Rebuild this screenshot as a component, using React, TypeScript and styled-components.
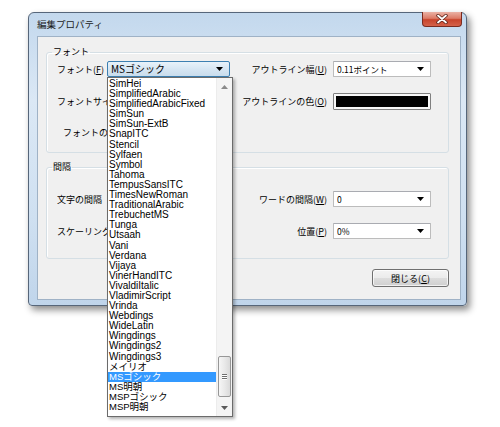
import styled, { createGlobalStyle } from "styled-components";

const GlobalStyle = createGlobalStyle`
  html, body { margin: 0; padding: 0; background: #fff; }
  body {
    font-family: "Noto Sans CJK JP", "Noto Sans", sans-serif;
    font-size: 9px;
    color: #000;
  }
`;

const fonts = [
  "SimHei",
  "SimplifiedArabic",
  "SimplifiedArabicFixed",
  "SimSun",
  "SimSun-ExtB",
  "SnapITC",
  "Stencil",
  "Sylfaen",
  "Symbol",
  "Tahoma",
  "TempusSansITC",
  "TimesNewRoman",
  "TraditionalArabic",
  "TrebuchetMS",
  "Tunga",
  "Utsaah",
  "Vani",
  "Verdana",
  "Vijaya",
  "VinerHandITC",
  "VivaldiItalic",
  "VladimirScript",
  "Vrinda",
  "Webdings",
  "WideLatin",
  "Wingdings",
  "Wingdings2",
  "Wingdings3",
  "メイリオ",
  "MSゴシック",
  "MS明朝",
  "MSPゴシック",
  "MSP明朝",
];
const selectedFont = "MSゴシック";

const Page = styled.div`
  box-sizing: border-box;
  height: 427px;
  overflow: hidden;
  padding: 12px 0 0 28px;
`;

const Window = styled.div`
  box-sizing: border-box;
  width: 439px;
  height: 294px;
  display: flex;
  flex-direction: column;
  padding: 0 5px 5px 8px;
  border: 1px solid #56667a;
  border-radius: 6px 6px 4px 4px;
  background: linear-gradient(180deg, #c3d8ed 0%, #dbe8f5 30%, #cfe0f1 70%, #c0d5eb 100%);
  box-shadow: 3px 4px 7px rgba(0, 0, 0, 0.45);
`;

const TitleBar = styled.div`
  height: 23px;
  display: flex;
  align-items: flex-start;
`;

const Title = styled.span`
  margin-top: 5px;
  font-size: 9.5px;
  line-height: 12px;
  color: #1a1a1a;
`;

const CloseButton = styled.div`
  margin: -1px -1px 0 auto;
  width: 40px;
  height: 15px;
  display: flex;
  align-items: center;
  justify-content: center;
  box-sizing: border-box;
  border: 1px solid #7a2b1f;
  border-top: none;
  border-radius: 0 0 4px 4px;
  background: linear-gradient(180deg, #eab1a4 0%, #dc7a66 45%, #c8442c 55%, #d4624a 100%);
`;

const Client = styled.div`
  flex: 1;
  display: flex;
  flex-direction: column;
  padding: 9px 11px 0 8px;
  border: 1px solid #9fb2c6;
  background: #f0f0f0;
`;

const Group = styled.fieldset<{ $gap?: number }>`
  margin: 0 0 ${(p) => p.$gap ?? 0}px 0;
  padding: 0;
  min-width: 0;
  border: 1px solid #d5dfe5;
  border-radius: 3px;
  box-shadow: inset 1px 1px 0 #fff;
`;

const Legend = styled.legend`
  margin-left: 5px;
  padding: 0 1px;
  font-size: 9px;
  line-height: 12px;
`;

const GroupBody = styled.div<{ $top: number; $bottom: number; $gap: number }>`
  display: flex;
  flex-direction: column;
  gap: ${(p) => p.$gap}px;
  padding: ${(p) => `${p.$top}px 17px ${p.$bottom}px 10px`};
`;

const Row = styled.div`
  display: grid;
  grid-template-columns: 50px 123px 1fr 98px;
  align-items: center;
  height: 16px;
`;

const LeftLabel = styled.span<{ $indent?: number }>`
  white-space: nowrap;
  overflow: hidden;
  padding-left: ${(p) => p.$indent ?? 0}px;
`;

const RightLabel = styled.span`
  text-align: right;
  padding-right: 6px;
  white-space: nowrap;
`;

const ComboCell = styled.div`
  position: relative;
  height: 16px;
`;

const Combo = styled.div<{ $focused?: boolean }>`
  box-sizing: border-box;
  height: 16px;
  display: flex;
  align-items: center;
  padding: 0 6px 0 3px;
  border: 1px solid ${(p) => (p.$focused ? "#3c7fb1" : "#bcbcbc")};
  border-top-color: ${(p) => (p.$focused ? "#3c7fb1" : "#a9abb1")};
  border-radius: ${(p) => (p.$focused ? "2px" : "1px")};
  background: ${(p) =>
    p.$focused ? "linear-gradient(180deg, #e8f2fa 0%, #d6e6f3 50%, #c9dcec 100%)" : "#fff"};
  font-size: ${(p) => (p.$focused ? "10px" : "8.5px")};
  line-height: 14px;
`;

const ComboValue = styled.span`
  flex: 1;
  white-space: nowrap;
  overflow: hidden;
`;

const Swatch = styled.div`
  box-sizing: border-box;
  height: 17px;
  padding: 2px;
  border: 1px solid #808080;
  border-radius: 1px;
  background: #f7f7f7;
`;

const SwatchFill = styled.div`
  height: 100%;
  background: #000;
`;

const FontList = styled.div`
  position: absolute;
  z-index: 10;
  top: 16px;
  left: 0;
  width: 126px;
  height: 340px;
  box-sizing: border-box;
  display: flex;
  border: 1px solid #6b6b6b;
  background: #fff;
  box-shadow: 2px 2px 3px rgba(0, 0, 0, 0.3);
`;

const ListItems = styled.div`
  flex: 1;
  padding-top: 1px;
  overflow: hidden;
`;

const ListItem = styled.div<{ $selected?: boolean; $jp?: boolean }>`
  height: 10.1px;
  line-height: 10.1px;
  padding-left: 1px;
  white-space: nowrap;
  font-family: "Liberation Sans", "Noto Sans CJK JP", sans-serif;
  font-size: ${(p) => (p.$jp ? "9.5px" : "10px")};
  color: ${(p) => (p.$selected ? "#fff" : "#000")};
  background: ${(p) => (p.$selected ? "#3399ff" : "transparent")};
`;

const ScrollBar = styled.div`
  width: 15px;
  display: flex;
  flex-direction: column;
  background: #f4f4f4;
  border-left: 1px solid #ececec;
`;

const ScrollArrow = styled.div`
  height: 17px;
  display: flex;
  align-items: center;
  justify-content: center;
`;

const ScrollTrack = styled.div`
  flex: 1;
  display: flex;
  flex-direction: column;
  justify-content: flex-end;
  padding: 0 1px 2px 1px;
`;

const Thumb = styled.div`
  height: 41px;
  box-sizing: border-box;
  display: flex;
  flex-direction: column;
  align-items: center;
  justify-content: center;
  gap: 1px;
  border: 1px solid #979797;
  border-radius: 2px;
  background: linear-gradient(90deg, #f6f6f6 0%, #e9e9e9 50%, #dadada 100%);
`;

const Grip = styled.div`
  width: 5px;
  height: 1px;
  background: #6f6f6f;
  box-shadow: 0 1px 0 #fff;
`;

const ButtonRow = styled.div`
  display: flex;
  justify-content: flex-end;
  padding-top: 10px;
`;

const PushButton = styled.div`
  box-sizing: border-box;
  width: 77px;
  height: 18px;
  display: flex;
  align-items: center;
  justify-content: center;
  border: 1px solid #707070;
  border-radius: 3px;
  background: linear-gradient(180deg, #f4f4f4 0%, #ebebeb 50%, #dddddd 51%, #cfcfcf 100%);
  box-shadow: inset 0 0 0 1px rgba(255, 255, 255, 0.7);
  font-size: 9px;
`;

function DownArrow() {
  return (
    <svg width="7" height="4" viewBox="0 0 7 4">
      <polygon points="0,0 7,0 3.5,4" fill="#000" />
    </svg>
  );
}

function ScrollGlyph({ up }: { up?: boolean }) {
  return (
    <svg width="7" height="4" viewBox="0 0 7 4">
      <polygon points={up ? "0,4 7,4 3.5,0" : "0,0 7,0 3.5,4"} fill={up ? "#8a8a8a" : "#5a5a5a"} />
    </svg>
  );
}

function CloseGlyph() {
  return (
    <svg width="12" height="10" viewBox="0 0 12 10">
      <path d="M2 1.5 L10 8.5 M10 1.5 L2 8.5" stroke="#5a2016" strokeWidth="3.4" strokeLinecap="round" />
      <path d="M2 1.5 L10 8.5 M10 1.5 L2 8.5" stroke="#fff" strokeWidth="1.8" strokeLinecap="round" />
    </svg>
  );
}

function Select({ value, focused, children }: { value?: string; focused?: boolean; children?: React.ReactNode }) {
  return (
    <ComboCell>
      <Combo $focused={focused}>
        <ComboValue>{value}</ComboValue>
        <DownArrow />
      </Combo>
      {children}
    </ComboCell>
  );
}

export default function App() {
  return (
    <>
      <GlobalStyle />
      <Page>
        <Window>
          <TitleBar>
            <Title>編集プロパティ</Title>
            <CloseButton>
              <CloseGlyph />
            </CloseButton>
          </TitleBar>
          <Client>
            <Group $gap={8}>
              <Legend>フォント</Legend>
              <GroupBody $top={3} $bottom={12} $gap={15.5}>
                <Row>
                  <LeftLabel>
                    フォント(<u>F</u>)
                  </LeftLabel>
                  <Select value={selectedFont} focused>
                    <FontList>
                      <ListItems>
                        {fonts.map((f) => (
                          <ListItem key={f} $selected={f === selectedFont} $jp={/[^\x00-\x7f]/.test(f)}>
                            {f}
                          </ListItem>
                        ))}
                      </ListItems>
                      <ScrollBar>
                        <ScrollArrow>
                          <ScrollGlyph up />
                        </ScrollArrow>
                        <ScrollTrack>
                          <Thumb>
                            <Grip />
                            <Grip />
                            <Grip />
                          </Thumb>
                        </ScrollTrack>
                        <ScrollArrow>
                          <ScrollGlyph />
                        </ScrollArrow>
                      </ScrollBar>
                    </FontList>
                  </Select>
                  <RightLabel>
                    アウトライン幅(<u>U</u>)
                  </RightLabel>
                  <Select value="0.11ポイント" />
                </Row>
                <Row>
                  <LeftLabel>フォントサイズ</LeftLabel>
                  <Select />
                  <RightLabel>
                    アウトラインの色(<u>O</u>)
                  </RightLabel>
                  <Swatch>
                    <SwatchFill />
                  </Swatch>
                </Row>
                <Row>
                  <LeftLabel $indent={6}>フォントの色</LeftLabel>
                  <Swatch>
                    <SwatchFill />
                  </Swatch>
                  <RightLabel />
                  <span />
                </Row>
              </GroupBody>
            </Group>
            <Group>
              <Legend>間隔</Legend>
              <GroupBody $top={18} $bottom={19} $gap={16}>
                <Row>
                  <LeftLabel>文字の間隔</LeftLabel>
                  <Select />
                  <RightLabel>
                    ワードの間隔(<u>W</u>)
                  </RightLabel>
                  <Select value="0" />
                </Row>
                <Row>
                  <LeftLabel>スケーリング(</LeftLabel>
                  <Select />
                  <RightLabel>
                    位置(<u>P</u>)
                  </RightLabel>
                  <Select value="0%" />
                </Row>
              </GroupBody>
            </Group>
            <ButtonRow>
              <PushButton>
                閉じる(<u>C</u>)
              </PushButton>
            </ButtonRow>
          </Client>
        </Window>
      </Page>
    </>
  );
}
